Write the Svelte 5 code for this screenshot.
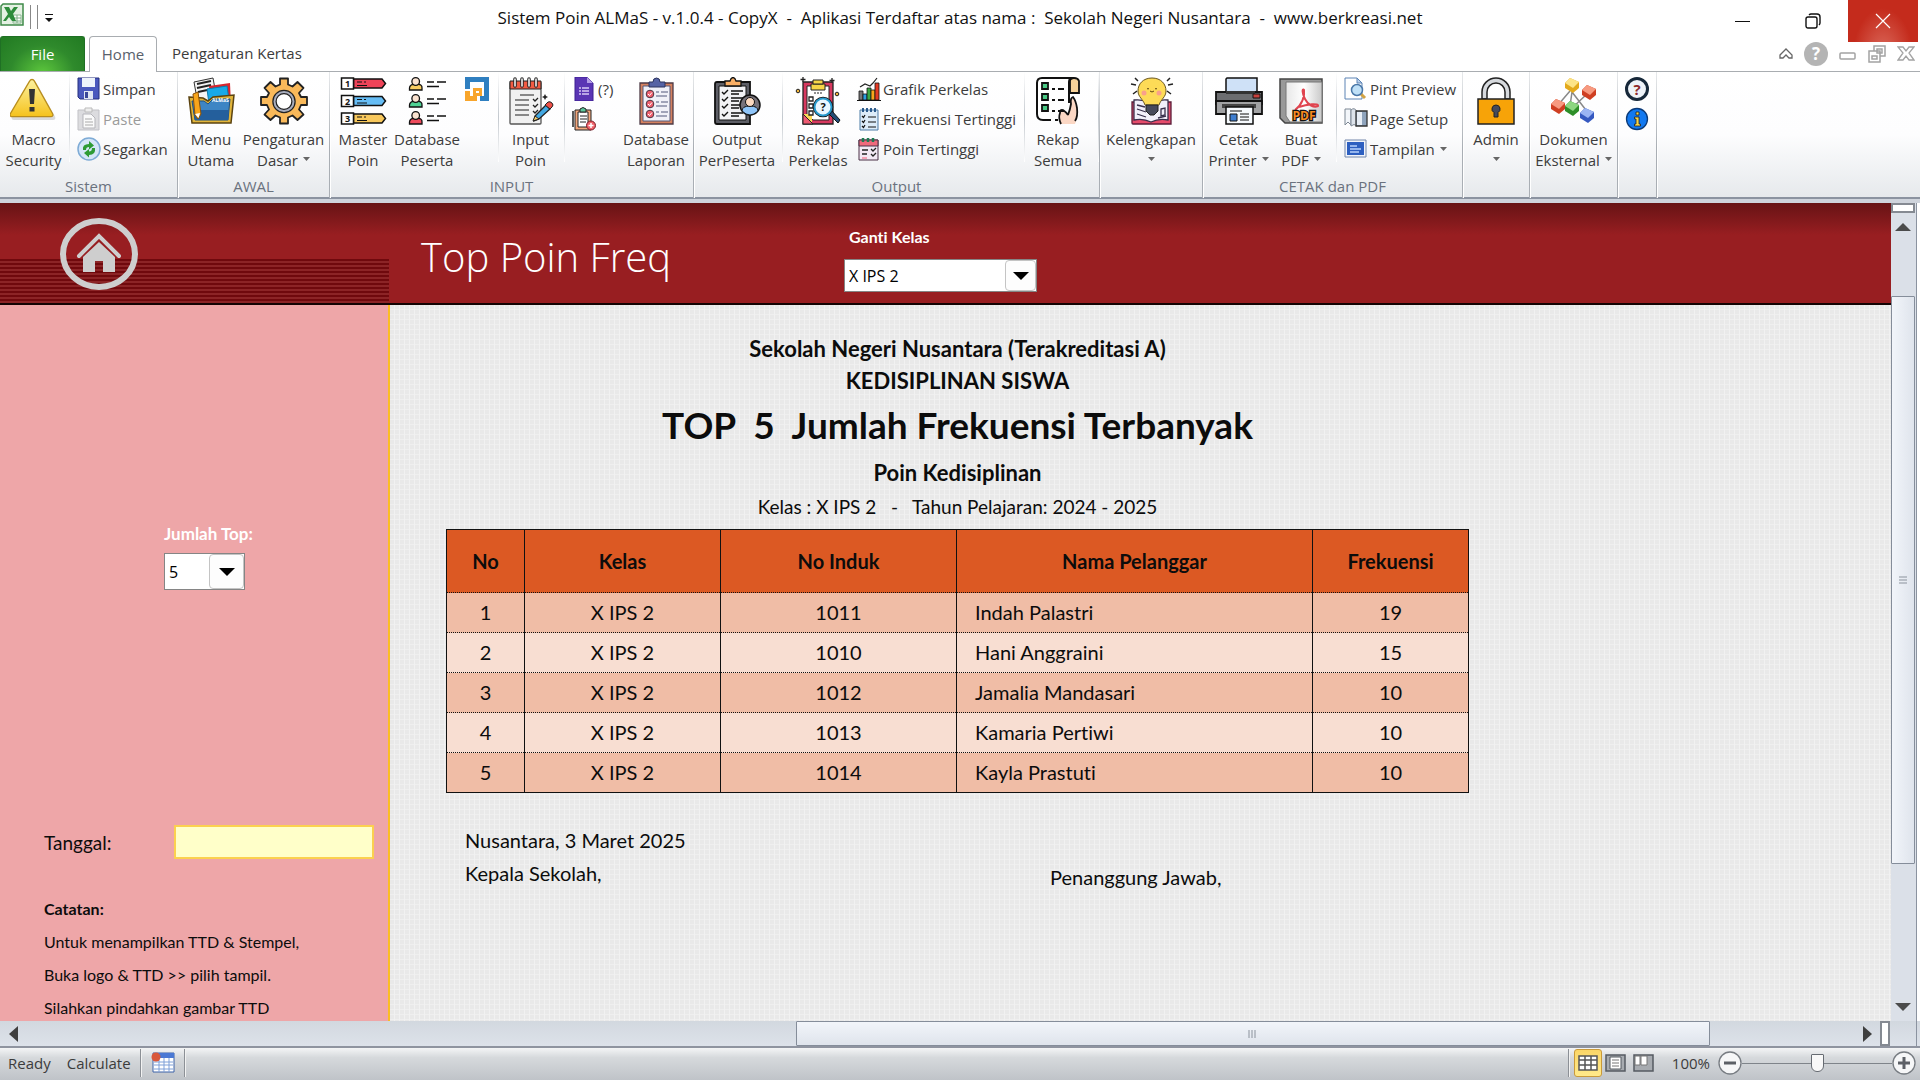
<script>
  // ribbon groups, left to right
  const groups = [
    {
      id: 'sistem',
      label: 'Sistem',
      items: [
        { icon: 'warning', lines: ['Macro', 'Security'] },
        { sep: true },
        { list: [
          { icon: 'save', text: 'Simpan' },
          { icon: 'paste', text: 'Paste', off: true },
          { icon: 'refresh', text: 'Segarkan' }
        ] }
      ]
    },
    {
      id: 'awal',
      label: 'AWAL',
      items: [
        { icon: 'folder', lines: ['Menu', 'Utama'] },
        { icon: 'gear', lines: ['Pengaturan', 'Dasar'], drop: true }
      ]
    },
    {
      id: 'input',
      label: 'INPUT',
      items: [
        { icon: 'tags', lines: ['Master', 'Poin'] },
        { icon: 'people', lines: ['Database', 'Peserta'] },
        { list: [{ icon: 'maze', name: 'Kode' }] },
        { sep: true },
        { icon: 'notepad', lines: ['Input', 'Poin'] },
        { sep: true },
        { list: [{ icon: 'form', text: '(?)' }, { icon: 'clipadd', name: 'Tambah' }] },
        { icon: 'laporan', lines: ['Database', 'Laporan'] }
      ]
    },
    {
      id: 'output',
      label: 'Output',
      items: [
        { icon: 'clipuser', lines: ['Output', 'PerPeserta'] },
        { sep: true },
        { icon: 'clipsearch', lines: ['Rekap', 'Perkelas'] },
        { list: [
          { icon: 'chart', text: 'Grafik Perkelas' },
          { icon: 'freq', text: 'Frekuensi Tertinggi' },
          { icon: 'calendar', text: 'Poin Tertinggi' }
        ] },
        { sep: true },
        { icon: 'scroll', lines: ['Rekap', 'Semua'] },
        { sep: true }
      ]
    },
    { id: 'lengkap', label: '', items: [{ icon: 'bulb', lines: ['Kelengkapan', ''], drop: true }] },
    {
      id: 'cetak',
      label: 'CETAK dan PDF',
      items: [
        { icon: 'printer', lines: ['Cetak', 'Printer'], drop: true },
        { icon: 'pdf', lines: ['Buat', 'PDF'], drop: true },
        { sep: true },
        { list: [
          { icon: 'preview', text: 'Pint Preview' },
          { icon: 'setup', text: 'Page Setup' },
          { icon: 'view', text: 'Tampilan', drop: true }
        ] }
      ]
    },
    { id: 'admin', label: '', items: [{ icon: 'lock', lines: ['Admin', ''], drop: true }] },
    { id: 'dokumen', label: '', items: [{ icon: 'nodes', lines: ['Dokumen', 'Eksternal'], drop: true }] },
    { id: 'bantuan', label: '', items: [{ list: [{ icon: 'ask', name: 'Bantuan' }, { icon: 'info', name: 'Info' }] }] }
  ];

  const rows = [
    { induk: '1011', nama: 'Indah Palastri', frek: 19 },
    { induk: '1010', nama: 'Hani Anggraini', frek: 15 },
    { induk: '1012', nama: 'Jamalia Mandasari', frek: 10 },
    { induk: '1013', nama: 'Kamaria Pertiwi', frek: 10 },
    { induk: '1014', nama: 'Kayla Prastuti', frek: 10 }
  ];

  let kelas = $state('X IPS 2');
  let top = $state('5');
  let tanggal = $state('');
  let zoom = $state(50);
</script>

{#snippet caret()}
  <svg class="caret" width="7" height="4" viewBox="0 0 7 4" aria-hidden="true"><path d="M0 0h7L3.5 4z" fill="#666" /></svg>
{/snippet}

{#snippet icon(name)}
  {#if name === 'warning'}
    <svg viewBox="0 0 48 48" width="48" height="48" aria-hidden="true">
      <defs><linearGradient id="gw" x1="0" y1="0" x2="0" y2="1"><stop offset="0" stop-color="#fdf2a0" /><stop offset="1" stop-color="#f5c21c" /></linearGradient></defs>
      <path d="M22 3c1.500 0 2.500.8 3.200 2L43.500 38c1 2 0 3.500-2 3.500h-39c-2 0-3-1.500-2-3.500L19 5c.7-1.200 1.600-2 3-2z" fill="#999" opacity=".35" transform="translate(1.500 1.500)" />
      <path d="M22 2.500c1 0 1.800.5 2.400 1.600L42.500 36.500c1 1.800.2 3.200-1.800 3.200H2.300c-2 0-2.800-1.400-1.800-3.200L19.600 4.100c.6-1.100 1.400-1.600 2.400-1.600z" fill="url(#gw)" stroke="#b98d1c" stroke-width="1.300" />
      <path d="M19 12h6l-1 15h-4zM19.500 30h5v4.500h-5z" fill="#333" />
    </svg>
  {:else if name === 'folder'}
    <svg viewBox="0 0 48 48" width="48" height="48" aria-hidden="true">
      <path d="M7 5l19-4 4 22-19 4z" fill="#f4f4f4" stroke="#333" />
      <path d="M10 7l14-3M10 11l14-3M11 15l14-3" stroke="#222" stroke-width="2" />
      <path d="M22 9l21-3 1 22-20 2z" fill="#d9262e" />
      <path d="M20 12l20-3 2 14-20 4z" fill="#19a9e8" stroke="#0b7cab" />
      <path d="M2 20l14 1 5 3 5-4 21-2-3 28H5z" fill="#e2b53a" stroke="#5b4310" stroke-width="1.500" />
      <path d="M5 24h12l4 3 5-5h17l-2 21H8z" fill="#3d85c4" stroke="#1d5082" />
      <path d="M6 33h36l-1 10H8z" fill="#245f9c" />
      <text x="25" y="25" font-size="5" font-weight="bold" fill="#fff">ALMaS</text>
      <path d="M6 17l5-2 3 22-3 5-3-4z" fill="#f8a51b" stroke="#8a520b" /><path d="M8 37l5-1-1.500 5z" fill="#fff" />
    </svg>
  {:else if name === 'gear'}
    <svg viewBox="0 0 48 48" width="48" height="48" aria-hidden="true">
      <path d="M20 1.500h8v6l4.500 2 5-4.500 6 6-4.500 5 2 4h6v8h-6l-2 4.500 4.500 5-6 5.500-5-4.500-4.500 2v6h-8v-6l-4.500-2-5 4.500-6-5.500 4.500-5-2-4.500h-6v-8h6l2-4-4.500-5 6-6 5 4.500 4.500-2z" fill="#f9b95a" stroke="#222" stroke-width="1.800" stroke-linejoin="round" />
      <circle cx="24" cy="24.500" r="9.500" fill="#fff" stroke="#222" stroke-width="4.500" />
      <circle cx="24" cy="24.500" r="9.500" fill="none" stroke="#a8adbd" stroke-width="2" />
      <circle cx="24" cy="24.500" r="6" fill="#fff" />
    </svg>
  {:else if name === 'tags'}
    <svg viewBox="0 0 48 48" width="48" height="48" aria-hidden="true">
      {#each [['1', 1, '#ee4358'], ['2', 18.500, '#66bdf5'], ['3', 36, '#f8c85c']] as [n, y, fill]}
        <g transform="translate(1 {y})">
          <path d="M13.500 1H42l3.500 4.500L42 10H13.500z" {fill} stroke="#111" stroke-width="1.500" />
          <path d="M1.500 0h12v11h-12z" fill="#fff" stroke="#111" stroke-width="1.500" />
          <path d="M17 4h5m2 0h2M17 7.500h10" stroke="#111" stroke-width="1.200" />
          <text x="7.500" y="9" font-size="9" font-weight="bold" text-anchor="middle" fill="#111">{n}</text>
        </g>
      {/each}
    </svg>
  {:else if name === 'people'}
    <svg viewBox="0 0 48 48" width="48" height="48" aria-hidden="true">
      {#each [[0, '#f8cd62'], [17, '#4fd394'], [34, '#ee4b5c']] as [y, fill]}
        <g transform="translate(1 {y})" stroke="#111" stroke-width="1.300">
          <path d="M5.500 13V11q0-4 6.500-4t6 4v2z" {fill} />
          <circle cx="11.700" cy="4.500" r="3.800" fill="#fbe3d0" />
          <path d="M23 5h7m3 0h9M23 9.500h12" stroke-width="1.500" />
        </g>
      {/each}
    </svg>
  {:else if name === 'notepad'}
    <svg viewBox="0 0 48 48" width="48" height="48" aria-hidden="true">
      <path d="M3 6h31v40q0 1-1 1H4q-1 0-1-1z" fill="#f1f1f1" stroke="#555" stroke-width="1.300" />
      <path d="M3 4h31v8H3z" fill="#f15b42" stroke="#222" />
      <path d="M8 2v7M15 2v7M22 2v7M29 2v7" stroke="#222" stroke-width="3.500" stroke-linecap="round" /><path d="M8 2v7M15 2v7M22 2v7M29 2v7" stroke="#fff" stroke-width="1.500" stroke-linecap="round" />
      <path d="M13 18h14M8 23h14M8 28h14M8 33h14M8 38h14" stroke="#666" stroke-width="1.300" />
      <path d="M26 22l2 2 3-3M26 28l2 2 3-3M26 34l2 2 3-3" fill="none" stroke="#222" stroke-width="1.300" />
      <path d="M28 39l11-11 4 4-11 10-5 2z" fill="#42a8e2" stroke="#222" stroke-width="1.300" /><path d="M26 44l2-5 4 3z" fill="#f6cf6c" stroke="#222" /><path d="M38 28l3-3q2-1 4 1t0 4l-2 2z" fill="#ef5048" stroke="#222" />
      <path d="M38 17l1 2 2 1-2 1-1 2-1-2-2-1 2-1z" fill="#222" />
    </svg>
  {:else if name === 'laporan'}
    <svg viewBox="0 0 48 48" width="48" height="48" aria-hidden="true">
      <path d="M8 6h33v41H8z" fill="#d5815f" stroke="#4d3a46" stroke-width="1.300" />
      <path d="M11 9h27v35H11z" fill="#f0f0f8" stroke="#555878" />
      <path d="M17 5h4q0-4 3.500-4T28 5h5v5H17z" fill="#5663a5" stroke="#2d345e" />
      {#each [17, 27, 37] as y}
        <circle cx="18" cy={y} r="3.800" fill="#ee5e6d" stroke="#4b3240" /><path d="M16 {y}l1.500 1.500L20 {y - 1.500}" stroke="#fff" fill="none" />
        <path d="M24 {y - 2}h3m2 0h7M24 {y + 2}h11" stroke="#50577a" stroke-width="1.200" />
      {/each}
    </svg>
  {:else if name === 'clipuser'}
    <svg viewBox="0 0 48 48" width="48" height="48" aria-hidden="true">
      <path d="M4 5h33v42H4q-2 0-2-2V7q0-2 2-2z" fill="#5d5e66" stroke="#111" stroke-width="1.800" /><path d="M6 9h27v34H6z" fill="#f2f2f5" stroke="#111" />
      <path d="M12 4h5q1-3.500 3-3.500T23 4h5v5H12z" fill="#f8ad64" stroke="#111" stroke-width="1.300" />
      {#each [15, 22, 29, 37] as y}
        <path d="M9 {y}l2 2 4-4M18 {y - 1}h12M18 {y + 2}h8" fill="none" stroke="#111" stroke-width="1.400" />
      {/each}
      <circle cx="37" cy="28" r="10" fill="#77727a" stroke="#111" stroke-width="1.500" /><path d="M29 34q0-5 8-5t8 5q-8 8-16 0z" fill="#8fc5f9" stroke="#111" /><circle cx="37" cy="25" r="4.500" fill="#fbd9c0" stroke="#111" />
    </svg>
  {:else if name === 'clipsearch'}
    <svg viewBox="0 0 48 48" width="48" height="48" aria-hidden="true">
      <path d="M9 5h30v42H9z" fill="#d7385f" stroke="#222" stroke-width="1.300" /><path d="M13 9h22v34H19l-6-6z" fill="#fff" stroke="#222" />
      <path d="M9 37h9v10H9z" fill="#f9d957" /><path d="M9 37l10 10H9z" fill="#ee5a72" stroke="#222" />
      <path d="M17 7h14v6H17z" fill="#f8d447" stroke="#222" /><path d="M19 3h10v4H19z" fill="#f8d447" stroke="#222" />
      <path d="M15 20h4v4h-4zM15 27h4v4h-4zM15 34h4v4h-4z" fill="#fff" stroke="#222" stroke-width="1.300" /><path d="M20 16h2m1 0h2m1 0h2" stroke="#222" />
      <path d="M34 36l3-3 9 10-2 3z" fill="#244d76" stroke="#111" />
      <circle cx="29" cy="30" r="8.500" fill="#fff" stroke="#111" stroke-width="3.500" /><circle cx="29" cy="30" r="8.500" fill="#e9f7ff" stroke="#2899cc" stroke-width="2" />
      <text x="29" y="34" font-size="11" font-weight="bold" text-anchor="middle" fill="#111">?</text>
      <path d="M9 0v5M6.500 2.500h5M38 1v5M35.500 3.500h5" stroke="#222" stroke-width="1.300" /><circle cx="4" cy="14" r="1.800" fill="#f2b63a" stroke="#222" /><circle cx="43" cy="17" r="1.800" fill="#f2b63a" stroke="#222" />
    </svg>
  {:else if name === 'scroll'}
    <svg viewBox="0 0 48 48" width="48" height="48" aria-hidden="true">
      <path d="M36 15V4q0-3 4-3t5 3v12h-9" fill="#f8d39a" stroke="#111" stroke-width="1.800" />
      <path d="M40 1H8Q3 1 3 6v31q0 6 6 6h26V5q0-4 4-4" fill="#fff" />
      <path d="M40 1H8Q3 1 3 6v31q0 6 6 6h8m4 0h3M35 26V5q0-4 4-4" fill="none" stroke="#111" stroke-width="2" />
      <path d="M27 47q-3-6-1-11 2-5 6-1l2 3 3-11q-1-6 2-7 3 4 4 11 1 9-2 16z" fill="#fbd7c4" />
      <path d="M27 47q-3-6-1-11 0-4 3-3 3 2 5 5M34 38q2-5 3-11-1-6 2-7 3 4 4 11 1 9-2 13" fill="none" stroke="#111" stroke-width="1.800" />
      {#each [6, 17, 28] as y}
        <path d="M8 {y}h6v6H8z" fill="#4aca84" stroke="#111" stroke-width="1.800" /><path d="M18 {y + 6}h3m3 0h6" stroke="#111" stroke-width="1.800" />
      {/each}
    </svg>
  {:else if name === 'bulb'}
    <svg viewBox="0 0 48 48" width="48" height="48" aria-hidden="true">
      <path d="M5 25h39v22H6q-1 0-1-1z" fill="#e64b6b" stroke="#5b1d39" stroke-width="1.300" />
      <path d="M7 23q9-1 17 3 9-4 17-3v20q-9-2-17 2-8-4-17-2z" fill="#f2effa" stroke="#39304c" stroke-width="1.300" />
      <path d="M10 28l8 2M10 32l9 3M10 37l9 3M31 41l8-2" stroke="#39304c" stroke-width="1.300" /><path d="M34 32l4-1v7l-4 1z" fill="none" stroke="#39304c" stroke-width="1.300" />
      <path d="M25 1C16 1 11 7 11 14c0 6 5 8 7 14h14c2-6 7-8 7-14C39 7 34 1 25 1z" fill="#fddb57" stroke="#6a5620" />
      <path d="M19 28h12v6l-4 4h-4l-4-4z" fill="#484a5b" stroke="#222" />
      <circle cx="17" cy="16" r="2.500" fill="#f9a08b" /><circle cx="32" cy="16" r="2.500" fill="#f9a08b" /><path d="M20 12q1-1 2 0M28 12q1-1 2 0M23 14q2 2 4 0" fill="none" stroke="#5c4412" />
      <path d="M8 1l3 3M4 7l5 1M6 17l4-3M43 1l-3 3M46 7l-5 1M44 17l-4-3" stroke="#222" stroke-width="1.500" />
    </svg>
  {:else if name === 'printer'}
    <svg viewBox="0 0 48 48" width="48" height="48" aria-hidden="true">
      <path d="M12 1h30v14H11V2z" fill="#cfe1f7" stroke="#111" stroke-width="1.500" />
      <path d="M1 15h46v12H1z" fill="#6c6d70" stroke="#111" stroke-width="1.800" /><path d="M11 14h29v3H11z" fill="#333" />
      <path d="M1 24h46v13H1z" fill="#a1a2a4" stroke="#111" stroke-width="1.800" /><path d="M38 17h7v4h-7z" fill="#c8403c" stroke="#111" />
      <path d="M7 27h34v4H7z" fill="#444" /><path d="M11 30h27v17H11z" fill="#f5f9fd" stroke="#111" stroke-width="1.500" />
      <path d="M15 37h7v7h-7z" fill="#3e7ed0" stroke="#111" /><path d="M15 34h12M25 37h9M25 40h9M25 43h9" stroke="#111" />
    </svg>
  {:else if name === 'pdf'}
    <svg viewBox="0 0 48 48" width="48" height="48" aria-hidden="true">
      <defs><linearGradient id="gp"><stop offset="0" stop-color="#e8e8e8" /><stop offset=".5" stop-color="#fff" /><stop offset="1" stop-color="#c9c9c9" /></linearGradient></defs>
      <path d="M3 2h42v44H8l-5-5z" fill="#999" stroke="#444" stroke-width="1.500" /><path d="M9 5h36v40H13l-4-6z" fill="url(#gp)" stroke="#777" />
      <path d="M18 33c7-5 10-14 9-20-2-2-2 3 1 9s9 9 13 7c1-3-11-2-19 1" fill="none" stroke="#e0444f" stroke-width="2" />
      <text x="27" y="43" font-size="12" font-weight="bold" text-anchor="middle" fill="#f78a1e" stroke="#111" stroke-width="2.500" paint-order="stroke">PDF</text>
    </svg>
  {:else if name === 'lock'}
    <svg viewBox="0 0 48 48" width="48" height="48" aria-hidden="true">
      <path d="M10 22V15a14 14 0 0 1 28 0v7h-5V15a9 9 0 0 0-18 0v7z" fill="#d6d9dd" stroke="#222" stroke-width="1.500" />
      <path d="M6 22h36v25H6z" fill="#f7a308" stroke="#222" stroke-width="1.500" />
      <path d="M24 28a4 4 0 0 1 2 7.500V40h-4v-4.500A4 4 0 0 1 24 28z" fill="#444a5c" stroke="#222" />
    </svg>
  {:else if name === 'nodes'}
    <svg viewBox="0 0 48 48" width="48" height="48" aria-hidden="true">
      <path d="M20 14L8 28M22 15l-2 14M22 15l17 22M37 17L22 31" stroke="#888" stroke-width="1.500" />
      {#each [['#e3a91b', '#fce487', 15, 1], ['#cf3f22', '#f79a80', 32, 8], ['#cf3f22', '#f79a80', 1, 22], ['#2d8e28', '#8cd680', 15, 24], ['#3558c0', '#9bb4f3', 30, 31]] as [dark, lite, x, y]}
        <g transform="translate({x} {y})"><path d="M5 0l9 4v6l-6 5-8-5V5z" fill={dark} /><path d="M5 0l9 4-6 6-8-5z" fill={lite} /></g>
      {/each}
    </svg>
  {:else if name === 'save'}
    <svg viewBox="0 0 24 24" width="24" height="24" aria-hidden="true"><path d="M1 1h21v21H3l-2-2z" fill="#4a58bd" stroke="#252f7d" /><path d="M5 1h13v9H5z" fill="#eef3fb" /><path d="M7 14h9v8H7z" fill="#dfe5f2" /><path d="M8 15h3v6H8z" fill="#3a4698" /></svg>
  {:else if name === 'paste'}
    <svg viewBox="0 0 24 24" width="24" height="24" aria-hidden="true"><path d="M1 3h21v20H1z" fill="#dcdcdf" stroke="#c1c1c6" /><path d="M8 1h7v4H8z" fill="#eee" stroke="#bbb" /><path d="M6 7h8l4 4v10H6z" fill="#fafafa" stroke="#b5b5ba" /><path d="M8 12h7M8 15h8M8 18h8" stroke="#aaa" /></svg>
  {:else if name === 'refresh'}
    <svg viewBox="0 0 24 24" width="24" height="24" aria-hidden="true"><circle cx="12" cy="12" r="11" fill="#d5e6f8" stroke="#7eabd6" stroke-width="1.500" /><path d="M6 13q-1-6 6-6V4l5 4.500-5 4V10q-3 0-3 3zM18 11q1 7-6 7v2.500L7 16l5-4v2.500q3 0 3-3.500z" fill="#2e9b35" /></svg>
  {:else if name === 'maze'}
    <svg viewBox="0 0 24 24" width="24" height="24" aria-hidden="true"><path d="M0 0h24v24h-9v-5h4V5H5v7H0z" fill="#2f7fc0" /><path d="M0 24V14h5v5h3v-8h9v8h-5v5zM11 14v2h3v-2z" fill="#f8a52b" /></svg>
  {:else if name === 'form'}
    <svg viewBox="0 0 24 24" width="24" height="24" aria-hidden="true"><path d="M3 0h12l6 6v18H3z" fill="#5a35b4" stroke="#3c2191" /><path d="M15 0l6 6h-6z" fill="#b39ce6" /><path d="M7 11h2m1 0h7M7 14h2m1 0h7M7 17h2m1 0h7" stroke="#d7c9f5" stroke-width="1.300" /></svg>
  {:else if name === 'clipadd'}
    <svg viewBox="0 0 24 24" width="24" height="24" aria-hidden="true"><path d="M1 4v16" stroke="#222" stroke-width="1.500" /><path d="M3 3h16v20H3z" fill="#f3a77c" stroke="#222" /><path d="M6 5h10v15H6z" fill="#fff" stroke="#222" /><path d="M8 2q3-3 6 0v3H8z" fill="#5dc79a" stroke="#222" /><path d="M8 9h7M8 12h7M8 15h6" stroke="#222" /><circle cx="19" cy="18.500" r="4.500" fill="#f0626a" stroke="#7c1e29" /><path d="M19 16v5M16.500 18.500h5" stroke="#fff" stroke-width="1.500" /></svg>
  {:else if name === 'chart'}
    <svg viewBox="0 0 24 24" width="24" height="24" aria-hidden="true"><g stroke="#111" stroke-width=".8"><path d="M2 14h4v9H2z" fill="#777" /><path d="M6 17h4v6H6z" fill="#2c9fe0" /><path d="M10 11h4v12h-4z" fill="#3aa845" /><path d="M14 13h4v10h-4z" fill="#f8a61c" /><path d="M18 6h4v17h-4z" fill="#e53a24" /></g><path d="M0 23.500h24" stroke="#111" /><path d="M3 10l5-3 5 2 3-3 4-5" fill="none" stroke="#222" stroke-width="1.200" /></svg>
  {:else if name === 'freq'}
    <svg viewBox="0 0 24 24" width="24" height="24" aria-hidden="true"><path d="M3 3h18v20H3z" fill="#dcecf9" stroke="#4d7da6" /><path d="M6 1v4M10 1v4M14 1v4M18 1v4" stroke="#1d4f83" stroke-width="1.800" /><path d="M5 9l1.500 1.500L8 8M5 14l1.500 1.500L8 13M5 19l1.500 1.500L8 18M11 10h8M11 15h8M11 20h8" fill="none" stroke="#111" stroke-width="1.200" /></svg>
  {:else if name === 'calendar'}
    <svg viewBox="0 0 24 24" width="24" height="24" aria-hidden="true"><path d="M2 3h19v20H2z" fill="#f2e9f4" stroke="#4b3046" /><path d="M2 3h19v6H2z" fill="#ef6a7c" stroke="#4b3046" /><path d="M6 1v4M11 1v4M16 1v4" stroke="#1f7a53" stroke-width="2.500" /><path d="M5 13h6M5 17h5M14 12l2 2 3-3M14 17l2 2 3-3" fill="none" stroke="#222" stroke-width="1.300" /><path d="M5 20h5v2H5z" fill="#f5a0b4" /></svg>
  {:else if name === 'preview'}
    <svg viewBox="0 0 24 24" width="24" height="24" aria-hidden="true"><path d="M1 1h12l5 5v16H1z" fill="#fff" stroke="#5c84b5" /><path d="M13 1l5 5h-5z" fill="#bcd2ec" stroke="#5c84b5" /><path d="M16 16l5 5" stroke="#d2a344" stroke-width="3" /><circle cx="13" cy="13" r="5.500" fill="#bfe0f7" stroke="#4977a8" stroke-width="1.500" /></svg>
  {:else if name === 'setup'}
    <svg viewBox="0 0 24 24" width="24" height="24" aria-hidden="true"><path d="M1 2h6v16l-3-3-3 3z" fill="#f3f6fa" stroke="#7d8794" /><path d="M7 3q3-3 6 1v15q-3-3-6 0z" fill="#dde3eb" stroke="#7d8794" /><path d="M12 4h11v15H12z" fill="#8fa4bd" stroke="#333" stroke-width="1.300" /><path d="M13 5h5v13h-5z" fill="#e7edf5" /></svg>
  {:else if name === 'view'}
    <svg viewBox="0 0 24 24" width="24" height="24" aria-hidden="true"><path d="M1 3h21v17H1z" fill="#f1f4fa" stroke="#7387ab" /><path d="M3 5h17v13H3z" fill="#2d5fc0" /><path d="M6 9h7M6 12h11M6 15h9" stroke="#b8d2fb" stroke-width="1.300" /></svg>
  {:else if name === 'ask'}
    <svg viewBox="0 0 24 24" width="24" height="24" aria-hidden="true"><circle cx="12" cy="12" r="10.500" fill="#eef3f8" stroke="#17283a" stroke-width="3" /><text x="12" y="17.500" font-size="15" font-weight="bold" text-anchor="middle" fill="#8e2a2a">?</text></svg>
  {:else if name === 'info'}
    <svg viewBox="0 0 24 24" width="24" height="24" aria-hidden="true"><circle cx="12" cy="12" r="10.500" fill="#1279f0" stroke="#0b3a78" stroke-width="1.300" /><path d="M11 5h3v3h-3zM9.500 10H14v7h1.500v2h-6v-2H11v-5H9.500z" fill="#f8d648" stroke="#222" stroke-width=".8" /></svg>
  {/if}
{/snippet}

<div class="app">
  <header class="titlebar">
    <div class="quick">
      <svg width="24" height="24" viewBox="0 0 24 24" aria-hidden="true"><path d="M3 1h20v21H1V3z" fill="#e4f1e3" stroke="#3f8a49" stroke-width="1.500" /><path d="M13 12h8v8h-8z" fill="#fff" stroke="#8bb892" /><path d="M13 15h8M13 18h8M17 12v8" stroke="#7dae85" /><path d="M4 4h5l2 4 3-4h4l-5 7 3 7h-4l-3-4-3 4H3l5-7z" fill="#2d8c3b" /></svg>
      <i></i><i></i>
      <button aria-label="Customize"><svg width="10" height="9" viewBox="0 0 10 9"><path d="M1 0h8v1H1zM1 4h8L5 8z" fill="#111" /></svg></button>
    </div>
    <h1>Sistem Poin ALMaS - v.1.0.4 - CopyX&nbsp; -&nbsp; Aplikasi Terdaftar atas nama :&nbsp; Sekolah Negeri Nusantara&nbsp; -&nbsp; www.berkreasi.net</h1>
    <div class="window">
      <button aria-label="Minimize"><svg width="16" height="16" viewBox="0 0 16 16"><path d="M0 8.500h15" stroke="#111" /></svg></button>
      <button aria-label="Restore"><svg width="16" height="16" viewBox="0 0 16 16" fill="none" stroke="#111" stroke-width="1.400"><rect x="1" y="4" width="11" height="11" rx="2" /><path d="M4 2q1-1 2-1h6q3 0 3 3v6q0 1-1 2" /></svg></button>
      <button class="close" aria-label="Close"><svg width="16" height="16" viewBox="0 0 16 16"><path d="M1 1l14 14M15 1L1 15" stroke="#fff" stroke-width="1.200" /></svg></button>
    </div>
  </header>

  <nav class="tabs">
    <button class="file">File</button>
    <button class="tab active">Home</button>
    <button class="tab">Pengaturan Kertas</button>
    <div class="mdi">
      <button aria-label="Collapse ribbon"><svg width="14" height="12" viewBox="0 0 14 12"><path d="M1 7l6-6 6 6v3h-3l-3-3-3 3H1z" fill="#fff" stroke="#666" stroke-width="1.300" /></svg></button>
      <button aria-label="Help"><svg width="24" height="24" viewBox="0 0 24 24"><circle cx="12" cy="12" r="12" fill="#b4b4b4" /><text x="12" y="18" font-size="17" font-weight="bold" text-anchor="middle" fill="#fff">?</text></svg></button>
      <button aria-label="Minimize workbook"><svg width="18" height="18" viewBox="0 0 18 18"><rect x="1" y="8" width="15" height="6" rx="1" fill="#fff" stroke="#a3a3a3" stroke-width="1.500" /></svg></button>
      <button aria-label="Restore workbook"><svg width="18" height="18" viewBox="0 0 18 18" fill="#fff" stroke="#a3a3a3" stroke-width="1.500"><path d="M6 1h11v10H6z" /><path d="M9 4h5v4H9zM1 6h11v11H1z" /><path d="M4 11h5v3H4z" /></svg></button>
      <button aria-label="Close workbook"><svg width="18" height="18" viewBox="0 0 18 18"><path d="M1 2h5l3 4 3-4h5l-5 6 5 7h-5l-3-4-3 4H1l5-7z" fill="#fff" stroke="#a3a3a3" stroke-width="1.300" /></svg></button>
    </div>
  </nav>

  <div class="ribbon">
    {#each groups as g}
      <section class="group">
        <div class="tools {g.id}">
          {#each g.items as item}
            {#if item.sep}
              <span class="sep"></span>
            {:else if item.list}
              <div class="list">
                {#each item.list as small}
                  <button class="small" disabled={small.off} aria-label={small.text ?? small.name}>
                    {@render icon(small.icon)}{small.text ?? ''}
                    {#if small.drop}{@render caret()}{/if}
                  </button>
                {/each}
              </div>
            {:else}
              <button class="big">
                {@render icon(item.icon)}
                <span>{item.lines[0]}</span>
                <span>{item.lines[1]}{#if item.drop}{@render caret()}{/if}</span>
              </button>
            {/if}
          {/each}
        </div>
        <div class="label">{g.label}</div>
      </section>
    {/each}
  </div>

  <div class="work">
    <div class="sheet">
      <div class="banner">
        <div class="banner-side">
          <button class="home" aria-label="Home">
            <svg width="80" height="74" viewBox="0 0 80 74"><ellipse cx="40" cy="37" rx="36" ry="33" fill="none" stroke="#cecece" stroke-width="6" /><path d="M20 39l20-20 20 20" fill="none" stroke="#cecece" stroke-width="4" stroke-linecap="round" /><path d="M40 25l16 15v15H44V44h-8v11H24V40z" fill="#cecece" /></svg>
          </button>
        </div>
        <h2>Top Poin Freq</h2>
        <div class="field">
          <label for="kelas">Ganti Kelas</label>
          <div class="combo wide">
            <select id="kelas" bind:value={kelas}><option>X IPS 2</option></select>
            <span class="arrow"></span>
          </div>
        </div>
      </div>

      <div class="body">
        <aside>
          <div class="topn">
            <label for="top">Jumlah Top:</label>
            <div class="combo">
              <select id="top" bind:value={top}><option>5</option></select>
              <span class="arrow"></span>
            </div>
          </div>
          <div class="date">
            <label for="tanggal">Tanggal:</label>
            <input id="tanggal" type="text" bind:value={tanggal} />
          </div>
          <div class="notes">
            <b>Catatan:</b>
            <p>Untuk menampilkan TTD &amp; Stempel,</p>
            <p>Buka logo &amp; TTD &gt;&gt; pilih tampil.</p>
            <p>Silahkan pindahkan gambar TTD</p>
          </div>
        </aside>

        <main>
          <div class="report">
            <p class="head">Sekolah Negeri Nusantara (Terakreditasi A)</p>
            <p class="head">KEDISIPLINAN SISWA</p>
            <h3>TOP&nbsp; 5&nbsp; Jumlah Frekuensi Terbanyak</h3>
            <p class="head sub">Poin Kedisiplinan</p>
            <p class="year">Kelas : X IPS 2 &nbsp; - &nbsp; Tahun Pelajaran: 2024 - 2025</p>
            <table>
              <thead>
                <tr><th class="no">No</th><th class="kelas">Kelas</th><th class="induk">No Induk</th><th class="nama">Nama Pelanggar</th><th>Frekuensi</th></tr>
              </thead>
              <tbody>
                {#each rows as r, i}
                  <tr><td>{i + 1}</td><td>X IPS 2</td><td>{r.induk}</td><td class="name">{r.nama}</td><td>{r.frek}</td></tr>
                {/each}
              </tbody>
            </table>
            <div class="sign">
              <div><p>Nusantara, 3 Maret 2025</p><p>Kepala Sekolah,</p></div>
              <p class="right">Penanggung Jawab,</p>
            </div>
          </div>
        </main>
      </div>
    </div>

    <div class="vscroll">
      <span class="split"></span>
      <button aria-label="Scroll up"><svg width="16" height="8" viewBox="0 0 16 8"><path d="M8 0l8 8H0z" fill="#4b4b4b" /></svg></button>
      <div class="before"></div>
      <div class="thumb"><svg width="8" height="9" viewBox="0 0 8 9"><path d="M0 1h8M0 4h8M0 7h8" stroke="#8b929c" /></svg></div>
      <div class="after"></div>
      <button aria-label="Scroll down"><svg width="16" height="8" viewBox="0 0 16 8"><path d="M0 0h16L8 8z" fill="#4b4b4b" /></svg></button>
    </div>
  </div>

  <div class="hscroll">
    <button aria-label="Scroll left"><svg width="9" height="16" viewBox="0 0 9 16"><path d="M9 0v16L0 8z" fill="#3f3f3f" /></svg></button>
    <div class="before"></div>
    <div class="thumb"><svg width="9" height="8" viewBox="0 0 9 8"><path d="M1 0v8M4 0v8M7 0v8" stroke="#8b929c" /></svg></div>
    <div class="after"></div>
    <button aria-label="Scroll right"><svg width="9" height="16" viewBox="0 0 9 16"><path d="M0 0l9 8-9 8z" fill="#3f3f3f" /></svg></button>
    <span class="split"></span>
    <span class="corner"></span>
  </div>

  <footer>
    <span>Ready</span>
    <span>Calculate</span>
    <i></i>
    <button aria-label="Record macro"><svg width="24" height="22" viewBox="0 0 24 22"><path d="M2 1h21v19H2z" fill="#fff" stroke="#3d62a8" /><path d="M2 1h21v5H2z" fill="#4a78d4" /><path d="M3 10h19M3 13h19M3 17h19M8 6v14M13 6v14M18 6v14" stroke="#7ea0d8" /><circle cx="5" cy="5" r="4.500" fill="#d9573a" /></svg></button>
    <i></i>
    <div class="status-right">
      <i></i>
      <button class="viewbtn on" aria-label="Normal"><svg width="20" height="16" viewBox="0 0 20 16"><path d="M1 1h18v14H1zM1 5h18M1 10h18M7 1v14M13 1v14" fill="#fff" stroke="#555" stroke-width="1.500" /></svg></button>
      <button class="viewbtn" aria-label="Page layout"><svg width="21" height="18" viewBox="0 0 21 18"><path d="M1 1h19v16H1z" fill="#a7abb0" stroke="#555b61" stroke-width="1.500" /><path d="M5 3h11v12H5z" fill="#fff" stroke="#555b61" /><path d="M7 6h7M7 9h7M7 12h7" stroke="#777" /></svg></button>
      <button class="viewbtn" aria-label="Page break"><svg width="21" height="18" viewBox="0 0 21 18"><path d="M1 1h19v16H1z" fill="#a7abb0" stroke="#555b61" stroke-width="1.500" /><path d="M2 2h5v9H2zM8 2h6v9H8z" fill="#fff" stroke="#777" /></svg></button>
      <span class="pct">100%</span>
      <button class="round" aria-label="Zoom out"><svg width="24" height="24" viewBox="0 0 24 24"><circle cx="12" cy="12" r="11" fill="#f6f7f8" stroke="#777c82" stroke-width="1.300" /><path d="M6 12h12" stroke="#5c6066" stroke-width="3" /></svg></button>
      <input type="range" min="0" max="100" bind:value={zoom} aria-label="Zoom" />
      <button class="round" aria-label="Zoom in"><svg width="24" height="24" viewBox="0 0 24 24"><circle cx="12" cy="12" r="11" fill="#f6f7f8" stroke="#777c82" stroke-width="1.300" /><path d="M6 12h12M12 6v12" stroke="#5c6066" stroke-width="3" /></svg></button>
    </div>
  </footer>
</div>

<style>
  :global(body) {
    margin: 0;
    overflow: hidden;
  }
  .app {
    height: 100vh;
    display: flex;
    flex-direction: column;
    font: 15px/21px "Open Sans", "Noto Sans", sans-serif;
    color: #3c3c3c;
    background: #fff;
  }
  button {
    font: inherit;
    color: inherit;
    background: none;
    border: 0;
    padding: 0;
    white-space: nowrap;
  }
  svg { display: block; flex: none; }
  p, h1, h2, h3 { margin: 0; }

  /* title bar */
  .titlebar {
    display: grid;
    grid-template-columns: 1fr auto 1fr;
    height: 36px;
  }
  .quick {
    display: flex;
    gap: 6px;
    padding-top: 3px;
  }
  .quick i {
    width: 1px;
    height: 24px;
    margin-top: 2px;
    background: #888;
  }
  .quick button {
    align-self: flex-start;
    padding-top: 11px;
  }
  h1 {
    font-size: 17px;
    font-weight: 400;
    line-height: 36px;
    color: #111;
  }
  .window {
    display: flex;
    justify-content: flex-end;
  }
  .window button {
    width: 70px;
    height: 42px;
    display: grid;
    place-items: center;
  }
  .close {
    background: radial-gradient(ellipse at 50% 130%, #db6a5c, #c42b1c 60%);
    margin-right: 2px;
  }

  /* tabs */
  .tabs {
    display: flex;
    height: 35px;
    border-bottom: 1px solid #a9adb1;
  }
  .file {
    width: 85px;
    color: #fff;
    border: 1px solid #1f7024;
    border-bottom: 0;
    border-radius: 3px 3px 0 0;
    background: radial-gradient(ellipse at 50% 110%, #5ec93d, #2f8a2c 55%, #217a22);
    margin-right: 4px;
  }
  .tab { padding: 0 15px; }
  .active {
    width: 68px;
    padding: 0;
    color: #59616c;
    background: #fff;
    border: 1px solid #a9adb1;
    border-bottom: 0;
    border-radius: 4px 4px 0 0;
    margin-bottom: -1px;
  }
  .mdi {
    margin-left: auto;
    display: flex;
    align-items: center;
    gap: 11px;
    padding-right: 5px;
  }

  /* ribbon */
  .ribbon {
    display: grid;
    grid-template-columns: 178px 152px 364px 406px 103px 260px 67px 88px 39px 1fr;
    height: 125px;
    background: linear-gradient(#fff, #fdfdfe 50%, #e6e9ec);
    border-bottom: 2px solid #8b93a0;
    box-shadow: 0 4px #cfd4dc;
    margin-bottom: 4px;
  }
  .group {
    min-width: 0;
    border-right: 1px solid;
    border-image: linear-gradient(#e8eaec, #a9aeb4 60%) 1;
    box-shadow: 1px 0 #fff;
  }
  .tools {
    display: grid;
    height: 102px;
  }
  .sistem { grid-template-columns: 67px 3px 1fr; }
  .awal { grid-template-columns: 66px 79px; }
  .input { grid-template-columns: 66px 62px 38px 3px 63px 3px 54px 1fr; }
  .output { grid-template-columns: 86px 3px 70px 1fr 3px 66px 8px; }
  .cetak { grid-template-columns: 71px 54px 9px 1fr; }
  .big {
    display: flex;
    flex-direction: column;
    align-items: center;
    justify-content: flex-start;
    padding-top: 5px;
    min-width: 0;
  }
  .big svg:first-child { margin-bottom: 4px; }
  .big span {
    display: flex;
    align-items: center;
    gap: 5px;
    height: 21px;
  }
  .sep {
    justify-self: end;
    width: 1px;
    height: 90px;
    background: linear-gradient(#fff, #c3c8ce 50%, #fff);
  }
  .list {
    padding: 2px 0 0 7px;
    min-width: 0;
  }
  .output .list { padding-left: 4px; }
  .small {
    display: flex;
    align-items: center;
    gap: 2px;
    height: 30px;
  }
  .small .caret { margin-left: 3px; }
  .small:disabled { color: #9a9a9a; }
  .label {
    text-align: center;
    line-height: 24px;
    color: #6a727e;
  }

  /* worksheet */
  .work {
    flex: 1;
    min-height: 0;
    display: flex;
  }
  .sheet {
    flex: 1;
    min-width: 0;
    display: flex;
    flex-direction: column;
    font-family: Lato, "Open Sans", sans-serif;
    font-variant-ligatures: none;
    color: #0c0c0c;
  }
  .banner {
    display: flex;
    height: 100px;
    background: linear-gradient(#671315, #981e21 32px);
    border-bottom: 2px solid #140404;
    color: #fff;
  }
  .banner-side {
    width: 389px;
    background: repeating-linear-gradient(#70090d 0 2px, #8c2426 2px 4px) 0 100% / 100% 44px no-repeat;
  }
  .home { margin: 14px 0 0 59px; }
  h2 {
    width: 423px;
    padding-left: 32px;
    font: 300 40px/108px "Open Sans", sans-serif;
  }
  .field label {
    display: block;
    padding: 24px 0 12px 5px;
    font-size: 16px;
    line-height: 20px;
    font-weight: 700;
  }
  .combo {
    position: relative;
    width: 81px;
    height: 37px;
  }
  .combo select {
    appearance: none;
    box-sizing: border-box;
    width: 100%;
    height: 100%;
    padding: 0 4px;
    border: 1px solid #858585;
    border-radius: 0;
    background: #fff;
    color: #000;
    font: 16px "Open Sans", sans-serif;
  }
  .wide {
    width: 193px;
    height: 33px;
  }
  .arrow {
    position: absolute;
    inset: 1px 1px 1px auto;
    width: 35px;
    box-sizing: border-box;
    border: 1px solid #c4c4c4;
    border-radius: 4px;
    background: #fdfdfd;
    display: grid;
    place-items: center;
    pointer-events: none;
  }
  .wide .arrow { width: 31px; }
  .arrow::after {
    content: "";
    border: 8px solid transparent;
    border-top: 8px solid #000;
    border-bottom: 0;
  }
  .body {
    flex: 1;
    min-height: 0;
    display: flex;
    overflow: hidden;
  }
  aside {
    box-sizing: border-box;
    width: 390px;
    flex: none;
    background: #eea6a8;
    border-right: 2px solid #fbbd23;
    padding-top: 218px;
  }
  .topn { padding-left: 164px; }
  .topn label {
    display: block;
    color: #fff;
    font-size: 17px;
    font-weight: 700;
    line-height: 22px;
    padding-bottom: 8px;
  }
  .date {
    display: flex;
    align-items: center;
    margin-top: 235px;
    padding-right: 14px;
    font-size: 19px;
  }
  .date label {
    width: 130px;
    padding-left: 44px;
  }
  .date input {
    flex: 1;
    min-width: 0;
    box-sizing: border-box;
    height: 34px;
    border: 2px solid #fbd04f;
    background: #ffffc9;
  }
  .notes {
    padding: 33px 0 0 44px;
    font-size: 16px;
    line-height: 33px;
  }
  main {
    flex: 1;
    min-width: 0;
    padding: 28px 56px;
    background:
      repeating-linear-gradient(90deg, transparent 0 4px, #f1f1f1 4px 5px),
      repeating-linear-gradient(transparent 0 4px, #efefef 4px 5px),
      #e9e9e9;
  }
  .report {
    max-width: 1023px;
    text-align: center;
    font-size: 20px;
  }
  .head {
    font-size: 22px;
    font-weight: 700;
    line-height: 32px;
  }
  h3 {
    font-size: 37px;
    line-height: 56px;
  }
  .sub { line-height: 40px; }
  .year {
    line-height: 28px;
    padding-bottom: 8px;
    font-size: 19px;
  }
  table {
    width: 100%;
    table-layout: fixed;
    border-collapse: collapse;
    border: 1px solid #111;
  }
  th, td {
    padding: 0;
    border-right: 1px solid #111;
    border-bottom: 1px dotted #111;
  }
  th {
    height: 62px;
    background: #dc5923;
  }
  td {
    height: 39px;
    background: #f0bda6;
  }
  tbody tr:nth-child(even) td { background: #f8ded2; }
  tbody tr:last-child td { border-bottom: 1px solid #111; }
  .no { width: 77px; }
  .kelas { width: 195px; }
  .induk { width: 235px; }
  .nama { width: 355px; }
  .name {
    text-align: left;
    padding-left: 18px;
  }
  .sign {
    display: grid;
    grid-template-columns: 604px 1fr;
    text-align: left;
    line-height: 33px;
    padding-top: 31px;
  }
  .sign > div { padding-left: 19px; }
  .right { padding-top: 37px; }

  /* scroll bars */
  .vscroll {
    display: flex;
    flex-direction: column;
    width: 24px;
    padding-right: 1px;
    border-right: 1px solid #8b93a0;
    margin-right: 3px;
    background: #dbe0e8;
  }
  .vscroll .split {
    height: 6px;
    border: 2px solid #858a92;
    background: #fff;
  }
  .vscroll button {
    display: grid;
    place-items: center;
    height: 28px;
  }
  .vscroll .before { flex: 55; }
  .vscroll .after { flex: 129; }
  .thumb {
    display: grid;
    place-items: center;
    border: 1px solid #858d9a;
    border-radius: 1px;
    background: linear-gradient(#f2f5fa, #dfe4ec);
  }
  .vscroll .thumb {
    flex: 568;
    background: linear-gradient(90deg, #f2f5fa, #dfe4ec);
  }
  .hscroll {
    display: flex;
    height: 25px;
    background: linear-gradient(#d2d8df, #dde2ea);
    border-bottom: 2px solid #8f94a0;
  }
  .hscroll button {
    width: 26px;
    display: grid;
    place-items: center;
  }
  .hscroll .before { flex: 770; }
  .hscroll .thumb { flex: 913; }
  .hscroll .after { flex: 144; }
  .hscroll .split {
    width: 6px;
    border: 2px solid #858a92;
    background: #fff;
  }
  .corner {
    width: 26px;
    margin-right: 3px;
    border-right: 1px solid #8b93a0;
  }

  /* status bar */
  footer {
    display: flex;
    align-items: center;
    box-sizing: border-box;
    height: 32px;
    padding: 0 4px 2px 8px;
    background: linear-gradient(#f4f5f6, #d6d9dc 30%, #bfc3c8);
  }
  footer > span { margin-right: 16px; }
  footer > span + span { margin-right: 9px; }
  footer i {
    width: 1px;
    height: 28px;
    border-right: 1px solid #f2f2f2;
    background: #8c9096;
  }
  footer > button { margin: 0 9px; }
  .status-right {
    margin-left: auto;
    display: flex;
    align-items: center;
  }
  .viewbtn {
    width: 28px;
    height: 28px;
    display: grid;
    place-items: center;
  }
  .on {
    margin-left: 4px;
    border: 1px solid #c99a3a;
    border-radius: 3px;
    background: linear-gradient(#fbd667, #ffe98a);
  }
  .pct { margin: 0 8px 0 14px; }
  input[type="range"] {
    appearance: none;
    width: 150px;
    height: 20px;
    margin: 0;
    background: linear-gradient(#7f848a, #7f848a) center / 100% 1px no-repeat;
  }
  input[type="range"]::-webkit-slider-thumb {
    appearance: none;
    width: 13px;
    height: 18px;
    border: 1px solid #666b72;
    border-radius: 1px 1px 6px 6px;
    background: #f8f8f8;
  }
</style>
